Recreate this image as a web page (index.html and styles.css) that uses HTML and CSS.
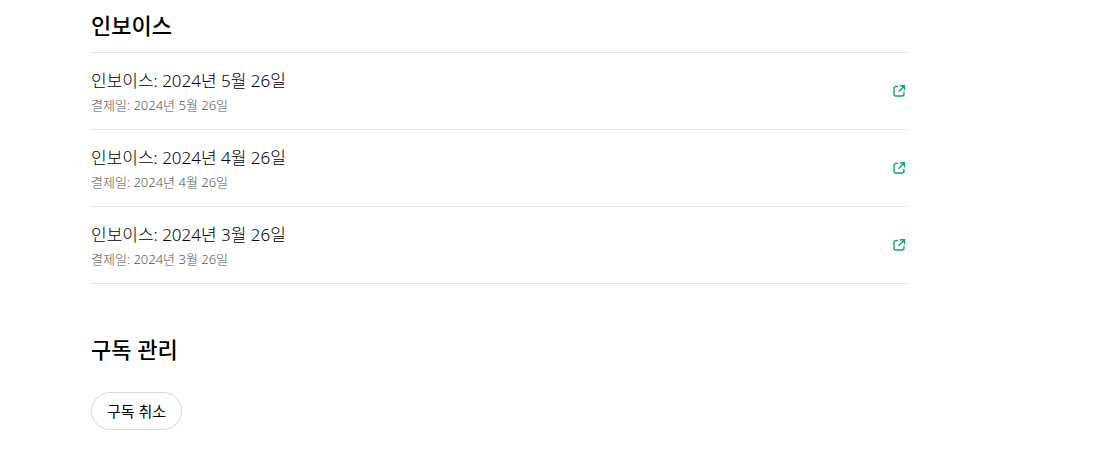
FILE: index.html
```html
<!DOCTYPE html>
<html lang="ko">
<head>
<meta charset="utf-8">
<meta name="viewport" content="width=device-width, initial-scale=1">
<title>구독 관리</title>
<link rel="stylesheet" href="styles.css">
</head>
<body>
<svg width="0" height="0" class="sprite" aria-hidden="true">
  <symbol id="external" viewBox="0 0 16 16">
    <path d="M6.500 3.500H5A2 2 0 0 0 3 5.500V11A2 2 0 0 0 5 13h6a2 2 0 0 0 2-2V9.500M9.500 2.800h4v4M13.200 3.200 8 8.300"/>
    <path class="tip" d="M10 2.500h3.800v3.800z"/>
  </symbol>
</svg>
<main class="billing">
  <section>
    <h2 class="title">인보이스</h2>
    <ul class="invoices">
      <li class="invoice">
        <div class="details"><p class="name">인보이스: 2024년 5월 26일</p><p class="paid">결제일: 2024년 5월 26일</p></div>
        <a class="open" href="#may" aria-label="2024년 5월 인보이스 열기"><svg class="icon"><use href="#external"/></svg></a>
      </li>
      <li class="invoice">
        <div class="details"><p class="name">인보이스: 2024년 4월 26일</p><p class="paid">결제일: 2024년 4월 26일</p></div>
        <a class="open" href="#april" aria-label="2024년 4월 인보이스 열기"><svg class="icon"><use href="#external"/></svg></a>
      </li>
      <li class="invoice">
        <div class="details"><p class="name">인보이스: 2024년 3월 26일</p><p class="paid">결제일: 2024년 3월 26일</p></div>
        <a class="open" href="#march" aria-label="2024년 3월 인보이스 열기"><svg class="icon"><use href="#external"/></svg></a>
      </li>
    </ul>
  </section>
  <section class="manage">
    <h2 class="title">구독 관리</h2>
    <button class="cancel" type="button">구독 취소</button>
  </section>
</main>
</body>
</html>
```
FILE: styles.css
```css
* { box-sizing: border-box; }
body {
  margin: 0;
  background: #fff;
  color: #000;
  font-family: "Noto Sans", "Noto Sans CJK KR", sans-serif;
  font-weight: 300;
}
h2, p, ul { margin: 0; padding: 0; }
.sprite { position: absolute; }
.billing { max-width: 998px; padding: 11px 91px 20px; }
.title { font-size: 22px; line-height: 28px; font-weight: 500; }
.invoices { margin-top: 13px; border-top: 1px solid #e5e5e5; list-style: none; }
.invoice {
  display: flex;
  align-items: center;
  justify-content: space-between;
  padding: 14px 0;
  border-bottom: 1px solid #e5e5e5;
}
.name { font-size: 17px; line-height: 28px; }
.paid { font-size: 13px; line-height: 20px; color: #555; }
.open { display: flex; color: #10a37f; }
.icon {
  width: 16px;
  height: 16px;
  fill: none;
  stroke: currentColor;
  stroke-width: 1.4;
  stroke-linecap: round;
  stroke-linejoin: round;
}
.tip { fill: currentColor; stroke: none; }
.manage { margin-top: 51px; }
.cancel {
  margin-top: 29px;
  height: 38px;
  padding: 0 15px 2px;
  border: 1px solid #d9d9d9;
  border-radius: 19px;
  background: #fff;
  color: #000;
  font: inherit;
  font-size: 15px;
  font-weight: 400;
}
```
